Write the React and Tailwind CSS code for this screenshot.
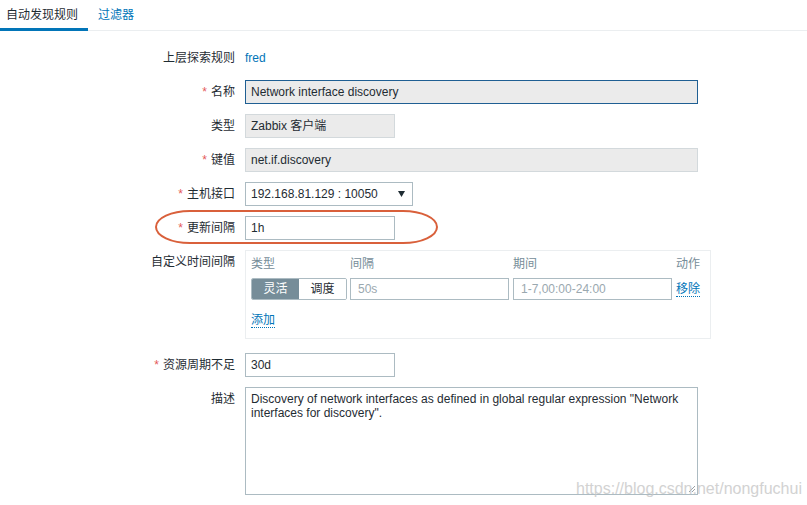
import React from "react";

const font = { fontFamily: '"Liberation Sans", Arial, "Noto Sans CJK SC", sans-serif' };

function Label({ children, required }) {
  return (
    <div className="w-[235px] shrink-0 text-right text-[12px] text-[#1f2c33] leading-[24px]">
      {required && <span className="mr-[4px] text-[#e45959]">*</span>}
      {children}
    </div>
  );
}

function Row({ label, required, children, className = "" }) {
  return (
    <div className={"flex items-start gap-[10px] " + className}>
      <Label required={required}>{label}</Label>
      {children}
    </div>
  );
}

export default function App() {
  return (
    <div className="relative h-[505px] w-[807px] overflow-hidden bg-white" style={font}>
      {/* tabs */}
      <div className="flex h-[31px] border-b border-[#ebeef0] text-[12px]">
        <div className="flex h-[31px] w-[88px] items-center border-b-[3px] border-[#0275b8] pl-[6px] pt-[1px] text-[#1f2c33]">
          自动发现规则
        </div>
        <div className="flex h-[31px] items-center pl-[10px] pb-[2px] text-[#0275b8]">过滤器</div>
      </div>

      <div className="flex flex-col gap-[10px] pt-[15px]">
        <Row label="上层探索规则">
          <span className="text-[12px] leading-[24px] text-[#0275b8]">fred</span>
        </Row>

        <Row label="名称" required>
          <div className="flex h-[24px] w-[453px] items-center border border-[#1f5f93] bg-[#ebebeb] px-[5px] text-[12px] text-[#1f2c33]">
            Network interface discovery
          </div>
        </Row>

        <Row label="类型">
          <div className="flex h-[24px] w-[150px] items-center border border-[#d3d9dc] bg-[#ebebeb] px-[5px] text-[12px] text-[#1f2c33]">
            Zabbix 客户端
          </div>
        </Row>

        <Row label="键值" required>
          <div className="flex h-[24px] w-[453px] items-center border border-[#d3d9dc] bg-[#ebebeb] px-[5px] text-[12px] text-[#1f2c33]">
            net.if.discovery
          </div>
        </Row>

        <Row label="主机接口" required>
          <div className="flex h-[24px] w-[168px] items-center justify-between border border-[#acbbc2] bg-white pl-[5px] pr-[7px] text-[12px] text-[#1f2c33]">
            <span>192.168.81.129 : 10050</span>
            <svg width="7" height="6" viewBox="0 0 7 6">
              <path d="M0 0 H7 L3.5 6 Z" fill="#1f2c33" />
            </svg>
          </div>
        </Row>

        <Row label="更新间隔" required className="relative">
          <div className="flex h-[24px] w-[150px] items-center border border-[#acbbc2] bg-white px-[5px] text-[12px] text-[#1f2c33]">
            1h
          </div>
          <svg className="pointer-events-none absolute left-[155px] top-[-6px]" width="284" height="35" viewBox="0 0 284 35">
            <rect x="1" y="1" width="281" height="32" rx="34" ry="16" fill="none" stroke="#d9603b" strokeWidth="2" />
          </svg>
        </Row>

        <Row label="自定义时间间隔">
          <div className="h-[89px] w-[466px] border border-[#ebeef0] bg-white pl-[5px] pr-[9px] pt-[1px] text-[12px]">
            <div className="flex h-[24px] items-center text-[#768d99]">
              <span className="w-[99px]">类型</span>
              <span className="w-[163px]">间隔</span>
              <span className="w-[163px]">期间</span>
              <span>动作</span>
            </div>
            <div className="mt-[2px] flex h-[22px] items-stretch">
              <div className="flex w-[96px] overflow-hidden rounded-[2px] border border-[#acbbc2]">
                <span className="flex w-[47px] items-center justify-center bg-[#768d99] text-white">灵活</span>
                <span className="flex flex-1 items-center justify-center bg-white text-[#1f2c33]">调度</span>
              </div>
              <div className="ml-[3px] flex w-[159px] items-center border border-[#acbbc2] px-[7px] text-[#9aa8af]">50s</div>
              <div className="ml-[4px] flex w-[159px] items-center border border-[#acbbc2] px-[7px] text-[#9aa8af]">1-7,00:00-24:00</div>
              <div className="ml-[4px] flex items-center">
                <span className="border-b border-dotted border-[#0275b8] leading-[14px] text-[#0275b8]">移除</span>
              </div>
            </div>
            <div className="mt-[13px] flex">
              <span className="border-b border-dotted border-[#0275b8] leading-[14px] text-[#0275b8]">添加</span>
            </div>
          </div>
        </Row>

        <Row label="资源周期不足" required className="mt-[4px]">
          <div className="flex h-[24px] w-[150px] items-center border border-[#acbbc2] bg-white px-[5px] text-[12px] text-[#1f2c33]">
            30d
          </div>
        </Row>

        <Row label="描述">
          <div className="relative h-[108px] w-[453px] border border-[#acbbc2] bg-white px-[5px] pt-[4px] text-[12px] leading-[14px] text-[#1f2c33]">
            Discovery of network interfaces as defined in global regular expression "Network interfaces for discovery".
            <svg className="absolute bottom-[1px] right-[1px]" width="8" height="8" viewBox="0 0 8 8">
              <path d="M7 1 L1 7 M7 4 L4 7" stroke="#9aa0a4" strokeWidth="1" />
            </svg>
          </div>
        </Row>
      </div>

      <div className="pointer-events-none absolute left-[576px] top-[477px] text-[16px] text-[#c8c8c8] opacity-80" style={{ fontFamily: '"Liberation Sans", Arial, sans-serif' }}>
        https://blog.csdn.net/nongfuchui
      </div>
    </div>
  );
}
